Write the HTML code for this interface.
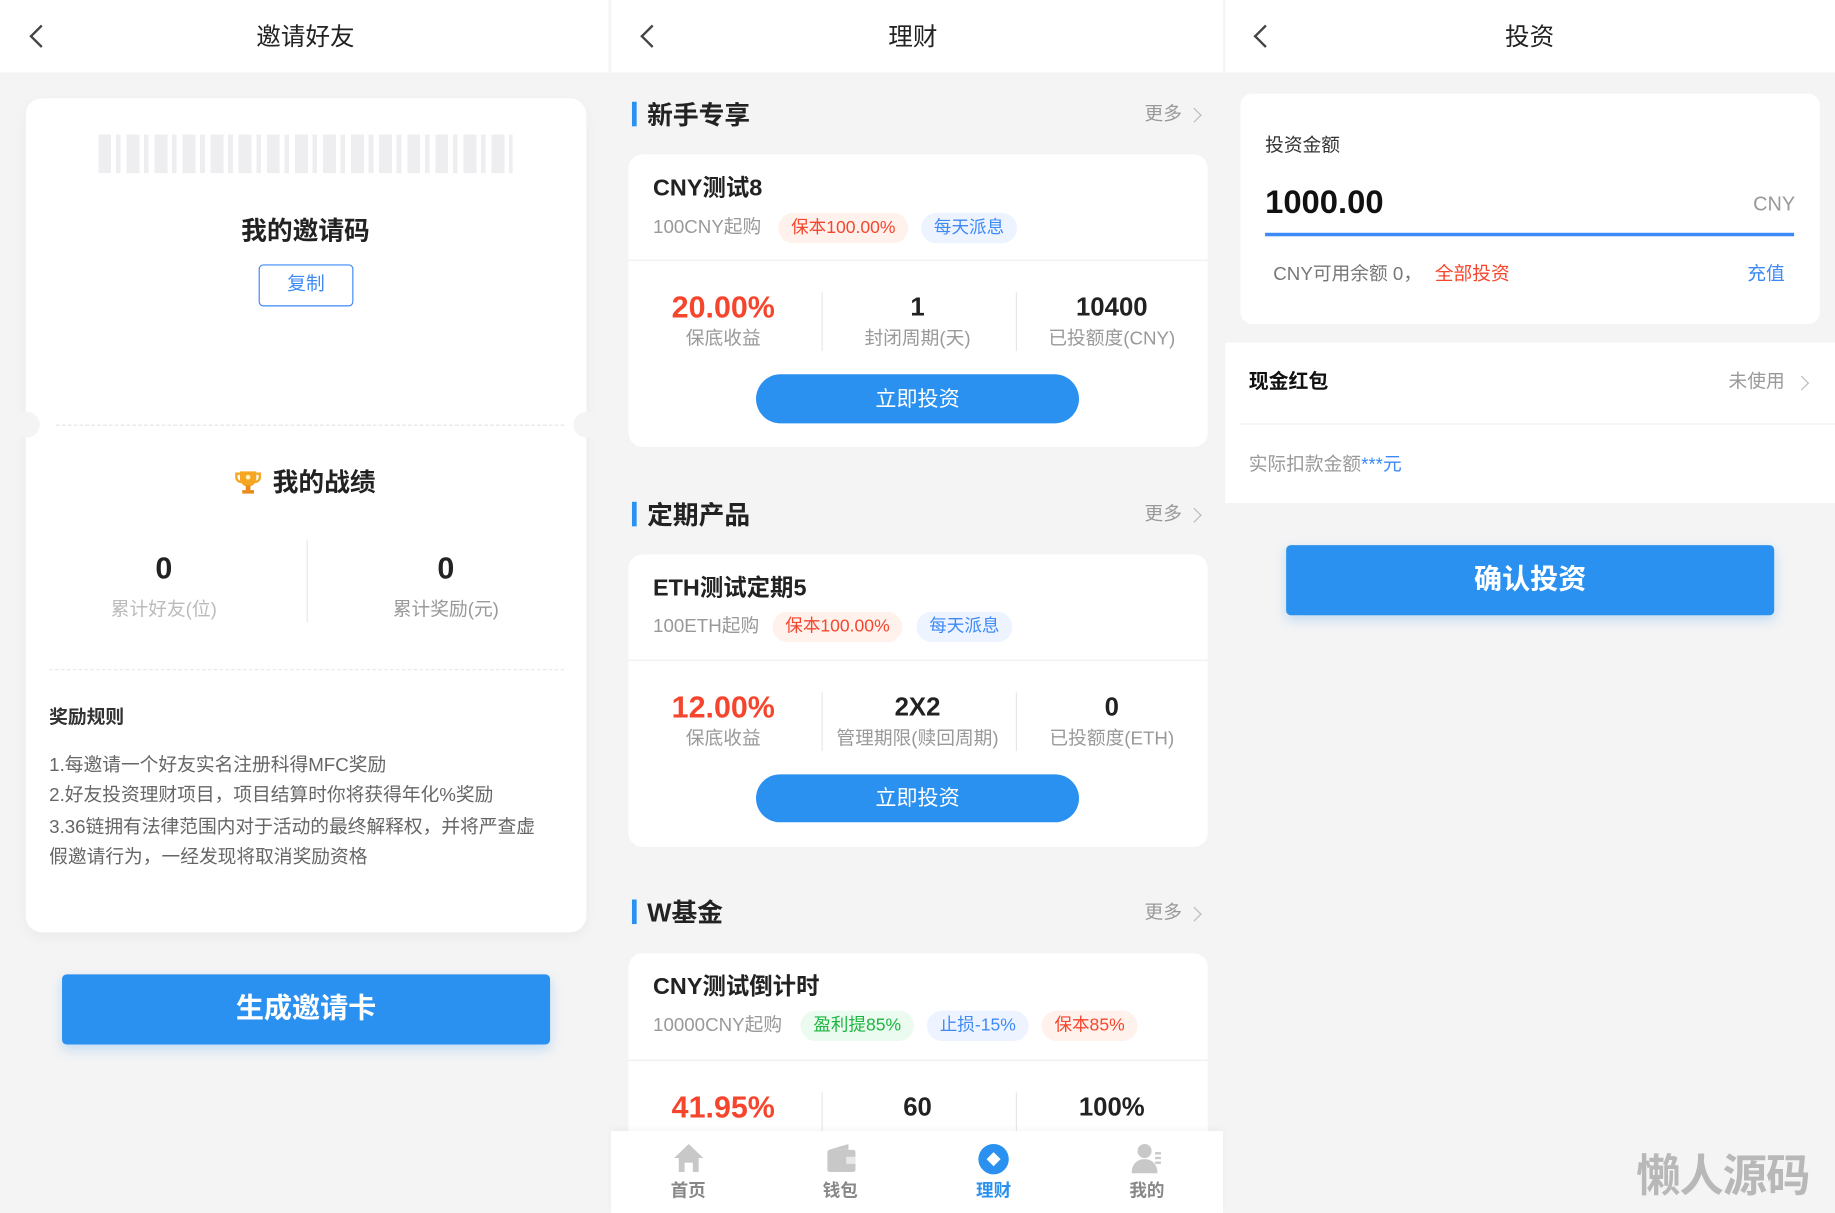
<!DOCTYPE html>
<html><head><meta charset="utf-8">
<style>
*{margin:0;padding:0;box-sizing:border-box}
html,body{width:1835px;height:1213px;overflow:hidden;background:#f4f4f4}
#w{position:absolute;left:0;top:0;width:1568px;height:1037px;transform:scale(1.1703,1.1697);transform-origin:0 0;font-family:"Liberation Sans","Noto Sans CJK SC",sans-serif;color:#333}
.a{position:absolute}
.t{position:absolute;white-space:nowrap;transform:translateY(-50%);line-height:1.2}
.c{position:absolute;white-space:nowrap;transform:translate(-50%,-50%);line-height:1.2}
.b{font-weight:bold}
.g{color:#999}
.wh{background:#fff}
.hdr{position:absolute;top:0;height:62px;background:#fff}
.chev{position:absolute;width:14px;height:14px;border-left:2px solid #444;border-bottom:2px solid #444;transform:rotate(45deg)}
.more{position:absolute;width:9px;height:9px;border-right:1.5px solid #bbb;border-top:1.5px solid #bbb;transform:rotate(45deg)}
.bar{position:absolute;width:4px;height:21px;background:#2b91f0}
.tag{position:absolute;height:26px;line-height:26px;border-radius:13px;padding:0 11px;font-size:15px;white-space:nowrap}
.red{background:#fff1ec;color:#f5462d}
.blu{background:#eef4ff;color:#3d8af7}
.grn{background:#ecfbef;color:#1bb640}
.card{position:absolute;background:#fff;border-radius:12px}
.btn{position:absolute;background:#2b91f0;color:#fff;text-align:center}
.vd{position:absolute;width:1px;background:#e6e6e6}
</style></head><body><div id="w">

<!-- LEFT PANEL -->
<div class="hdr" style="left:0;width:520px"></div>
<div class="chev" style="left:28px;top:24px"></div>
<div class="c" style="left:261px;top:32px;font-size:21px;color:#222">邀请好友</div>

<div class="card" style="left:22px;top:84px;width:479px;height:713px;border-radius:14px;box-shadow:0 4px 12px rgba(0,0,0,0.04)"></div>
<div class="a" style="left:84px;top:115px;width:354px;height:33px;background:repeating-linear-gradient(90deg,#eeeef0 0 11px,#fff 11px 15px,#eeeef0 15px 19px,#fff 19px 24px)"></div>
<div class="c b" style="left:261px;top:198px;font-size:22px;color:#222">我的邀请码</div>
<div class="a" style="left:221px;top:226px;width:81px;height:36px;border:1.5px solid #3d8af7;border-radius:4px;color:#3d8af7;font-size:16px;text-align:center;line-height:33px">复制</div>
<div class="a" style="left:48px;top:363px;width:434px;border-top:1px dashed #e2e2e2"></div>
<div class="a" style="left:12px;top:352px;width:22px;height:22px;border-radius:50%;background:#f4f4f4"></div>
<div class="a" style="left:490px;top:352px;width:22px;height:22px;border-radius:50%;background:#f4f4f4"></div>
<svg class="a" style="left:200px;top:400px" width="24" height="24" viewBox="0 0 24 24"><path d="M5 3h14v6a7 7 0 0 1-14 0z" fill="#f5a623"/><path d="M5 5H2v3a4 4 0 0 0 4 4M19 5h3v3a4 4 0 0 1-4 4" stroke="#f5a623" stroke-width="2" fill="none"/><rect x="10" y="15" width="4" height="4" fill="#e88b1a"/><rect x="7" y="19" width="10" height="3" fill="#e88b1a"/><circle cx="12" cy="8" r="2" fill="#fff3c0"/></svg>
<div class="t b" style="left:233px;top:413px;font-size:22px;color:#222">我的战绩</div>
<div class="c b" style="left:140px;top:486px;font-size:26px;color:#222">0</div>
<div class="c g" style="left:140px;top:522px;font-size:16px;color:#bbb">累计好友(位)</div>
<div class="vd" style="left:262px;top:462px;height:70px"></div>
<div class="c b" style="left:381px;top:486px;font-size:26px;color:#222">0</div>
<div class="c g" style="left:381px;top:522px;font-size:16px">累计奖励(元)</div>
<div class="a" style="left:42px;top:572px;width:440px;border-top:1px dashed #e8e8e8"></div>
<div class="t b" style="left:42px;top:614px;font-size:16px;color:#333">奖励规则</div>
<div class="a" style="left:42px;top:642px;font-size:16px;line-height:26.3px;color:#666;width:438px">1.每邀请一个好友实名注册科得MFC奖励<br>2.好友投资理财项目，项目结算时你将获得年化%奖励<br>3.36链拥有法律范围内对于活动的最终解释权，并将严查虚<br>假邀请行为，一经发现将取消奖励资格</div>
<div class="btn b" style="left:53px;top:833px;width:417px;height:60px;border-radius:4px;font-size:24px;line-height:60px;box-shadow:0 4px 10px rgba(43,145,240,0.25)">生成邀请卡</div>

<!-- MIDDLE PANEL -->
<div class="hdr" style="left:522px;width:523px"></div>
<div class="chev" style="left:550px;top:24px"></div>
<div class="c" style="left:780px;top:32px;font-size:21px;color:#222">理财</div>

<!-- section 1 -->
<div class="bar" style="left:540px;top:87px"></div>
<div class="t b" style="left:553px;top:99px;font-size:22px;color:#222">新手专享</div>
<div class="t g" style="left:978px;top:98px;font-size:16px">更多</div>
<div class="more" style="left:1016px;top:94px"></div>
<div class="card" style="left:537px;top:132px;width:495px;height:250px"></div>
<div class="t b" style="left:558px;top:161px;font-size:20px;color:#222">CNY测试8</div>
<div class="t g" style="left:558px;top:195px;font-size:16px">100CNY起购</div>
<div class="tag red" style="left:665px;top:182px">保本100.00%</div>
<div class="tag blu" style="left:787px;top:182px">每天派息</div>
<div class="a" style="left:537px;top:222px;width:495px;height:1px;background:#eee"></div>
<div class="c b" style="left:618px;top:263px;font-size:26px;color:#f5462d">20.00%</div>
<div class="c g" style="left:618px;top:290px;font-size:16px">保底收益</div>
<div class="vd" style="left:702px;top:250px;height:50px"></div>
<div class="c b" style="left:784px;top:263px;font-size:22px;color:#222">1</div>
<div class="c g" style="left:784px;top:290px;font-size:16px">封闭周期(天)</div>
<div class="vd" style="left:868px;top:250px;height:50px"></div>
<div class="c b" style="left:950px;top:263px;font-size:22px;color:#222">10400</div>
<div class="c g" style="left:950px;top:290px;font-size:16px">已投额度(CNY)</div>
<div class="btn" style="left:646px;top:320px;width:276px;height:42px;border-radius:21px;font-size:18px;line-height:42px">立即投资</div>

<!-- section 2 -->
<div class="bar" style="left:540px;top:429px"></div>
<div class="t b" style="left:553px;top:441px;font-size:22px;color:#222">定期产品</div>
<div class="t g" style="left:978px;top:440px;font-size:16px">更多</div>
<div class="more" style="left:1016px;top:436px"></div>
<div class="card" style="left:537px;top:474px;width:495px;height:250px"></div>
<div class="t b" style="left:558px;top:503px;font-size:20px;color:#222">ETH测试定期5</div>
<div class="t g" style="left:558px;top:536px;font-size:16px">100ETH起购</div>
<div class="tag red" style="left:660px;top:523px">保本100.00%</div>
<div class="tag blu" style="left:783px;top:523px">每天派息</div>
<div class="a" style="left:537px;top:564px;width:495px;height:1px;background:#eee"></div>
<div class="c b" style="left:618px;top:605px;font-size:26px;color:#f5462d">12.00%</div>
<div class="c g" style="left:618px;top:632px;font-size:16px">保底收益</div>
<div class="vd" style="left:702px;top:592px;height:50px"></div>
<div class="c b" style="left:784px;top:605px;font-size:22px;color:#222">2X2</div>
<div class="c g" style="left:784px;top:632px;font-size:16px">管理期限(赎回周期)</div>
<div class="vd" style="left:868px;top:592px;height:50px"></div>
<div class="c b" style="left:950px;top:605px;font-size:22px;color:#222">0</div>
<div class="c g" style="left:950px;top:632px;font-size:16px">已投额度(ETH)</div>
<div class="btn" style="left:646px;top:662px;width:276px;height:41px;border-radius:21px;font-size:18px;line-height:41px">立即投资</div>

<!-- section 3 -->
<div class="bar" style="left:540px;top:769px"></div>
<div class="t b" style="left:553px;top:781px;font-size:22px;color:#222">W基金</div>
<div class="t g" style="left:978px;top:781px;font-size:16px">更多</div>
<div class="more" style="left:1016px;top:777px"></div>
<div class="card" style="left:537px;top:815px;width:495px;height:200px"></div>
<div class="t b" style="left:558px;top:844px;font-size:20px;color:#222">CNY测试倒计时</div>
<div class="t g" style="left:558px;top:877px;font-size:16px">10000CNY起购</div>
<div class="tag grn" style="left:684px;top:864px">盈利提85%</div>
<div class="tag blu" style="left:792px;top:864px">止损-15%</div>
<div class="tag red" style="left:890px;top:864px">保本85%</div>
<div class="a" style="left:537px;top:906px;width:495px;height:1px;background:#eee"></div>
<div class="c b" style="left:618px;top:947px;font-size:26px;color:#f5462d">41.95%</div>
<div class="vd" style="left:702px;top:934px;height:33px"></div>
<div class="c b" style="left:784px;top:947px;font-size:22px;color:#222">60</div>
<div class="vd" style="left:868px;top:934px;height:33px"></div>
<div class="c b" style="left:950px;top:947px;font-size:22px;color:#222">100%</div>

<!-- tab bar -->
<div class="a wh" style="left:522px;top:967px;width:523px;height:70px;box-shadow:0 -2px 6px rgba(0,0,0,0.04)"></div>
<svg class="a" style="left:575px;top:977px" width="27" height="26" viewBox="0 0 27 26"><path d="M13.5 1L1 13h4v12h17V13h4z" fill="#c8c8c8"/><rect x="10" y="17" width="7" height="8" fill="#fff"/></svg>
<svg class="a" style="left:705px;top:977px" width="27" height="26" viewBox="0 0 27 26"><path d="M3 6L20 1v5z" fill="#c8c8c8"/><rect x="2" y="6" width="24" height="19" rx="2" fill="#c8c8c8"/><rect x="18" y="12" width="8" height="6" fill="#e8e8e8"/></svg>
<svg class="a" style="left:835px;top:977px" width="28" height="28" viewBox="0 0 28 28"><circle cx="14" cy="14" r="13" fill="#2b91f0"/><path d="M14 8l6 6-6 6-6-6z" fill="#fff"/></svg>
<svg class="a" style="left:966px;top:976px" width="28" height="28" viewBox="0 0 28 28"><circle cx="12" cy="8" r="6" fill="#c8c8c8"/><path d="M1 27c0-8 5-12 11-12s11 4 11 12z" fill="#c8c8c8"/><path d="M21 10h5M21 14h5M21 18h5" stroke="#c8c8c8" stroke-width="2"/></svg>
<div class="c b" style="left:588px;top:1019px;font-size:15px;color:#888">首页</div>
<div class="c b" style="left:718px;top:1019px;font-size:15px;color:#888">钱包</div>
<div class="c b" style="left:849px;top:1019px;font-size:15px;color:#2b91f0">理财</div>
<div class="c b" style="left:980px;top:1019px;font-size:15px;color:#888">我的</div>

<!-- RIGHT PANEL -->
<div class="hdr" style="left:1047px;width:521px"></div>
<div class="chev" style="left:1074px;top:24px"></div>
<div class="c" style="left:1307px;top:32px;font-size:21px;color:#222">投资</div>

<div class="card" style="left:1060px;top:80px;width:495px;height:197px;border-radius:10px"></div>
<div class="t" style="left:1081px;top:125px;font-size:16px;color:#333">投资金额</div>
<div class="t b" style="left:1081px;top:173px;font-size:28px;color:#111">1000.00</div>
<div class="t" style="left:1498px;top:175px;font-size:17px;color:#999">CNY</div>
<div class="a" style="left:1081px;top:199px;width:452px;height:2.5px;background:#3d8af7"></div>
<div class="t" style="left:1088px;top:235px;font-size:16px;color:#777">CNY可用余额 0，</div>
<div class="t" style="left:1226px;top:235px;font-size:16px;color:#f5462d">全部投资</div>
<div class="t" style="left:1493px;top:235px;font-size:16px;color:#3d8af7">充值</div>

<div class="a wh" style="left:1047px;top:293px;width:521px;height:137px"></div>
<div class="t b" style="left:1067px;top:327px;font-size:17px;color:#111">现金红包</div>
<div class="t" style="left:1477px;top:327px;font-size:16px;color:#999">未使用</div>
<div class="more" style="left:1535px;top:323px"></div>
<div class="a" style="left:1060px;top:362px;width:508px;height:1px;background:#f0f0f0"></div>
<div class="t" style="left:1067px;top:398px;font-size:16px;color:#999">实际扣款金额<span style="color:#3d8af7">***元</span></div>

<div class="btn b" style="left:1099px;top:466px;width:417px;height:60px;border-radius:4px;font-size:24px;line-height:60px;box-shadow:0 4px 10px rgba(43,145,240,0.25)">确认投资</div>

<div class="t b" style="left:1398px;top:1007px;font-size:38px;color:#b8b8b8;letter-spacing:-1px">懒人源码</div>
</div></body></html>
